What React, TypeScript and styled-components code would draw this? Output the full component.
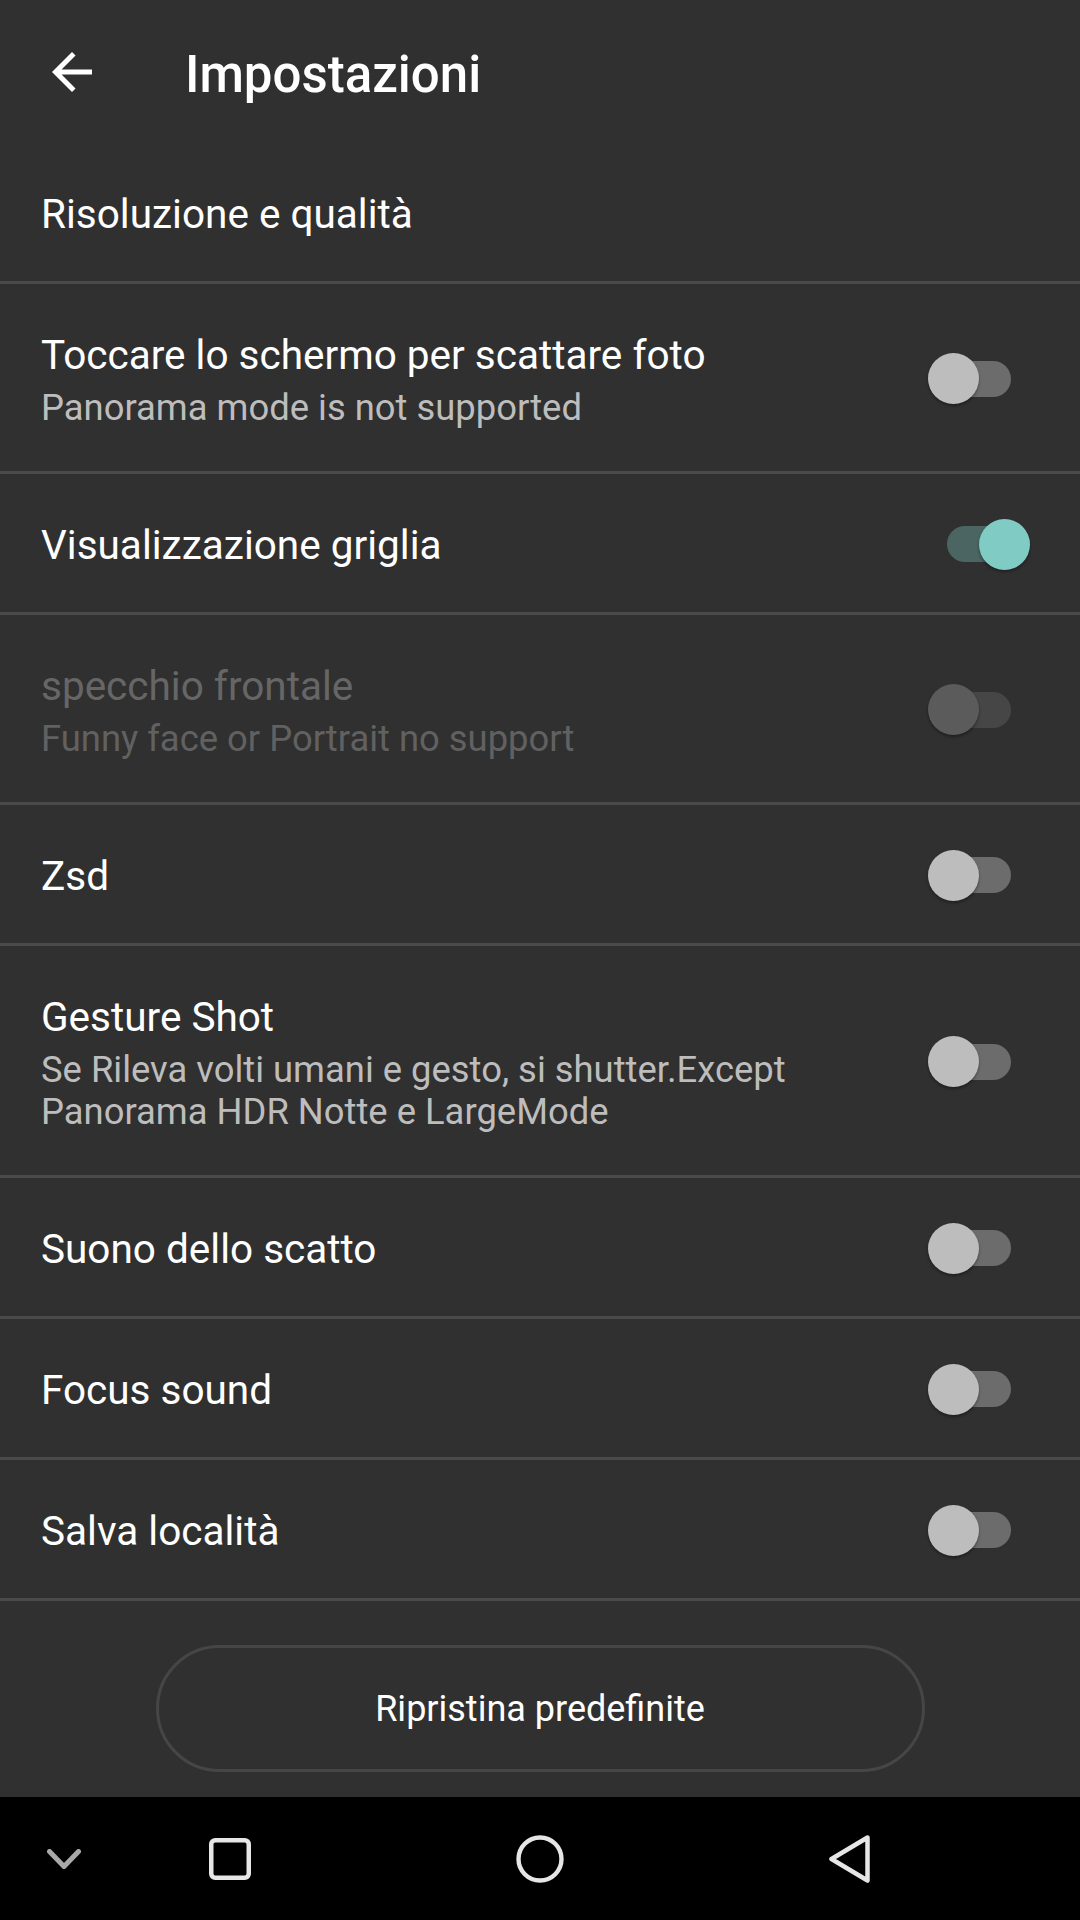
import React from "react";
import styled, { createGlobalStyle } from "styled-components";

const GlobalStyle = createGlobalStyle`
  html, body {
    margin: 0;
    padding: 0;
    background: #303030;
  }
  body {
    font-family: Roboto, "Noto Sans", "Liberation Sans", sans-serif;
    -webkit-font-smoothing: antialiased;
  }
  * { box-sizing: border-box; }
`;

const Screen = styled.div`
  width: 1080px;
  height: 1920px;
  background: #303030;
  display: flex;
  flex-direction: column;
  overflow: hidden;
`;

const Header = styled.header`
  height: 143px;
  display: flex;
  align-items: center;
  padding-left: 42px;
  flex-shrink: 0;
`;

const BackButton = styled.button`
  width: 60px;
  height: 60px;
  padding: 0;
  border: none;
  background: transparent;
  display: flex;
  align-items: center;
  justify-content: center;
  color: #ffffff;
  cursor: pointer;
`;

const HeaderTitle = styled.h1`
  margin: 0 0 0 83px;
  padding-top: 6px;
  font-size: 51px;
  line-height: 60px;
  font-weight: 500;
  color: #ffffff;
  letter-spacing: 0;
`;

const List = styled.div`
  display: flex;
  flex-direction: column;
`;

const Row = styled.div`
  display: flex;
  align-items: center;
  min-height: 141px;
  padding: 44px 50px 42px 41px;
  border-bottom: 3px solid #4a4a4a;
`;

const TextBlock = styled.div`
  flex: 1;
  min-width: 0;
  margin-right: 28px;
  display: flex;
  flex-direction: column;
`;

const Title = styled.div<{ $disabled?: boolean }>`
  font-size: 40.5px;
  line-height: 52px;
  padding-top: 1px;
  margin-bottom: -1px;
  font-weight: 400;
  color: ${(p) => (p.$disabled ? "#666666" : "#ffffff")};
`;

const Subtitle = styled.div<{ $disabled?: boolean }>`
  margin-top: 7px;
  font-size: 36.4px;
  line-height: 42px;
  font-weight: 400;
  color: ${(p) => (p.$disabled ? "#616161" : "#bdbdbd")};
`;

const SwitchBox = styled.div`
  position: relative;
  width: 102px;
  height: 51px;
  flex-shrink: 0;
`;

const Track = styled.div<{ $on: boolean; $disabled?: boolean }>`
  position: absolute;
  left: 19px;
  top: 7.5px;
  width: 64px;
  height: 36px;
  border-radius: 18px;
  background: ${(p) =>
    p.$disabled ? "#464646" : p.$on ? "#4a6562" : "#6c6c6c"};
`;

const Thumb = styled.div<{ $on: boolean; $disabled?: boolean }>`
  position: absolute;
  top: 0;
  left: ${(p) => (p.$on ? "51px" : "0")};
  width: 51px;
  height: 51px;
  border-radius: 50%;
  background: ${(p) =>
    p.$disabled ? "#5b5b5b" : p.$on ? "#80cbc4" : "#bdbdbd"};
  box-shadow: 0 2px 3px rgba(0, 0, 0, 0.35);
`;

const ButtonArea = styled.div`
  padding-top: 44px;
  display: flex;
  justify-content: center;
`;

const ResetButton = styled.button`
  width: 769px;
  height: 127px;
  border: 3px solid #464646;
  border-radius: 64px;
  background: transparent;
  color: #ffffff;
  font-family: Roboto, "Noto Sans", "Liberation Sans", sans-serif;
  font-size: 36px;
  font-weight: 400;
  cursor: pointer;
`;

const Spacer = styled.div`
  flex: 1;
`;

const NavBar = styled.nav`
  height: 123px;
  flex-shrink: 0;
  background: #000000;
  display: flex;
  align-items: center;
  padding-left: 30px;
`;

const NavSlot = styled.div<{ $w: number }>`
  width: ${(p) => p.$w}px;
  height: 60px;
  display: flex;
  align-items: center;
  justify-content: center;
`;

const NavGroup = styled.div`
  display: flex;
  align-items: center;
  gap: 210px;
  margin-left: 82px;
`;

type Item = {
  title: string;
  subtitle?: string;
  toggle?: "on" | "off";
  disabled?: boolean;
};

const items: Item[] = [
  { title: "Risoluzione e qualità" },
  {
    title: "Toccare lo schermo per scattare foto",
    subtitle: "Panorama mode is not supported",
    toggle: "off",
  },
  { title: "Visualizzazione griglia", toggle: "on" },
  {
    title: "specchio frontale",
    subtitle: "Funny face or Portrait no support",
    toggle: "off",
    disabled: true,
  },
  { title: "Zsd", toggle: "off" },
  {
    title: "Gesture Shot",
    subtitle:
      "Se Rileva volti umani e gesto, si shutter.Except Panorama HDR Notte e LargeMode",
    toggle: "off",
  },
  { title: "Suono dello scatto", toggle: "off" },
  { title: "Focus sound", toggle: "off" },
  { title: "Salva località", toggle: "off" },
];

const Switch: React.FC<{ on: boolean; disabled?: boolean }> = ({ on, disabled }) => (
  <SwitchBox>
    <Track $on={on} $disabled={disabled} />
    <Thumb $on={on} $disabled={disabled} />
  </SwitchBox>
);

export default function App() {
  return (
    <>
      <GlobalStyle />
      <Screen>
        <Header>
          <BackButton aria-label="Indietro">
            <svg width="60" height="60" viewBox="0 0 24 24" fill="currentColor">
              <path d="M20 11H7.83l5.59-5.59L12 4l-8 8 8 8 1.41-1.41L7.83 13H20v-2z" />
            </svg>
          </BackButton>
          <HeaderTitle>Impostazioni</HeaderTitle>
        </Header>
        <List>
          {items.map((it) => (
            <Row key={it.title}>
              <TextBlock>
                <Title $disabled={it.disabled}>{it.title}</Title>
                {it.subtitle && (
                  <Subtitle $disabled={it.disabled}>{it.subtitle}</Subtitle>
                )}
              </TextBlock>
              {it.toggle && <Switch on={it.toggle === "on"} disabled={it.disabled} />}
            </Row>
          ))}
        </List>
        <ButtonArea>
          <ResetButton>Ripristina predefinite</ResetButton>
        </ButtonArea>
        <Spacer />
        <NavBar>
          <NavSlot $w={68}>
            <svg width="34" height="20" viewBox="0 0 34 20">
              <polyline
                points="2.5,2.5 17,17.5 31.5,2.5"
                fill="none"
                stroke="#a8a8a8"
                strokeWidth="5"
                strokeLinecap="round"
                strokeLinejoin="round"
              />
            </svg>
          </NavSlot>
          <NavGroup>
            <NavSlot $w={100}>
              <svg width="42" height="42" viewBox="0 0 42 42">
                <rect
                  x="2.25"
                  y="2.25"
                  width="37.5"
                  height="37.5"
                  rx="4"
                  fill="none"
                  stroke="#e6e6e6"
                  strokeWidth="4.5"
                />
              </svg>
            </NavSlot>
            <NavSlot $w={100}>
              <svg width="48" height="48" viewBox="0 0 48 48">
                <circle cx="24" cy="24" r="21.5" fill="none" stroke="#e6e6e6" strokeWidth="4.4" />
              </svg>
            </NavSlot>
            <NavSlot $w={100}>
              <svg width="42" height="48" viewBox="0 0 42 48">
                <path
                  d="M38.5 2.5 L2.5 24 L38.5 45.5 Z"
                  fill="none"
                  stroke="#e6e6e6"
                  strokeWidth="4.5"
                  strokeLinejoin="round"
                />
              </svg>
            </NavSlot>
          </NavGroup>
        </NavBar>
      </Screen>
    </>
  );
}
